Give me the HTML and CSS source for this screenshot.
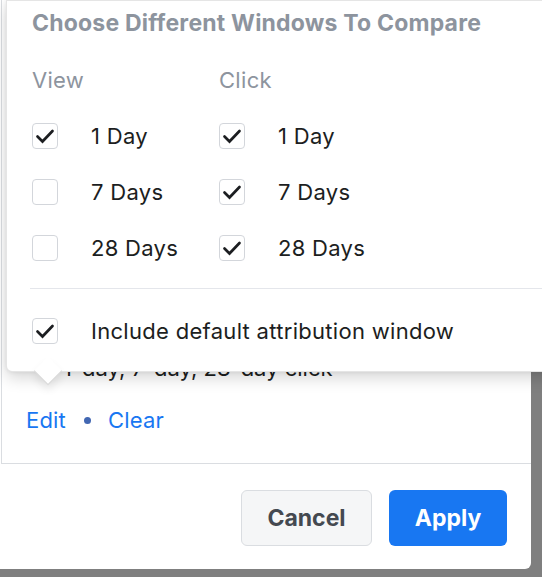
FILE: index.html
```html
<!DOCTYPE html>
<html lang="en">
<head>
<meta charset="utf-8">
<title>Choose Different Windows To Compare</title>
<link rel="stylesheet" href="styles.css">
</head>
<body>
<div class="dialog">
  <div class="dialog-body">
    <div class="card">
      <div class="summary">1-day, 7-day, 28-day click</div>
      <div class="links">
        <span class="link">Edit</span>
        <span class="dot"></span>
        <span class="link">Clear</span>
      </div>
    </div>
  </div>
  <div class="footer">
    <button class="btn btn-cancel">Cancel</button>
    <button class="btn btn-apply">Apply</button>
  </div>

  <div class="popover">
    <div class="pop-title">Choose Different Windows To Compare</div>
    <div class="grid">
      <div class="col-label">View</div>
      <div class="col-label">Click</div>
    </div>
    <div class="grid rows">
      <label class="opt"><span class="cb checked"><svg viewBox="0 0 26 26"><path d="M5.5 13.5 L10.5 18.5 L20.5 8"/></svg></span><span>1 Day</span></label>
      <label class="opt"><span class="cb checked"><svg viewBox="0 0 26 26"><path d="M5.5 13.5 L10.5 18.5 L20.5 8"/></svg></span><span>1 Day</span></label>
      <label class="opt"><span class="cb"></span><span>7 Days</span></label>
      <label class="opt"><span class="cb checked"><svg viewBox="0 0 26 26"><path d="M5.5 13.5 L10.5 18.5 L20.5 8"/></svg></span><span>7 Days</span></label>
      <label class="opt"><span class="cb"></span><span>28 Days</span></label>
      <label class="opt"><span class="cb checked"><svg viewBox="0 0 26 26"><path d="M5.5 13.5 L10.5 18.5 L20.5 8"/></svg></span><span>28 Days</span></label>
    </div>
    <div class="divider"></div>
    <label class="opt include"><span class="cb checked"><svg viewBox="0 0 26 26"><path d="M5.5 13.5 L10.5 18.5 L20.5 8"/></svg></span><span>Include default attribution window</span></label>
    <div class="caret"></div>
  </div>
</div>
</body>
</html>
```
FILE: styles.css
```css
html, body {
  margin: 0;
  padding: 0;
}
body {
  width: 542px;
  height: 577px;
  overflow: hidden;
  background: #7f7f7f;
  font-family: Inter, "Liberation Sans", Arial, sans-serif;
  color: #1c1e21;
}
.dialog {
  position: relative;
  width: 531px;
  height: 569px;
  background: #fff;
  border-bottom-right-radius: 6px;
  display: flex;
  flex-direction: column;
}
.dialog-body {
  height: 464px;
  padding-left: 1px;
}
.card {
  box-sizing: border-box;
  height: 464px;
  border-left: 1px solid #dadde1;
  border-bottom: 1px solid #dadde1;
  display: flex;
  flex-direction: column;
  justify-content: flex-end;
  padding: 0 0 31px 24px;
  font-size: 22px;
  line-height: 24px;
  letter-spacing: 0.2px;
}
.summary {
  padding-left: 37px;
  margin-bottom: 28px;
  letter-spacing: 0;
}
.links {
  display: flex;
  align-items: center;
}
.link {
  color: #1877f2;
}
.dot {
  width: 7px;
  height: 7px;
  border-radius: 50%;
  background: #4267b2;
  margin: 0 17px 0 18px;
}
.footer {
  flex: 1;
  display: flex;
  justify-content: flex-end;
  gap: 17px;
  padding: 26px 24px 0 0;
  box-sizing: border-box;
}
.btn {
  height: 56px;
  border-radius: 6px;
  font-family: Inter, "Liberation Sans", Arial, sans-serif;
  font-weight: 700;
  font-size: 23px;
  padding: 0;
  cursor: pointer;
}
.btn-cancel {
  width: 131px;
  background: #f5f6f7;
  border: 1.5px solid #dadde1;
  color: #444950;
}
.btn-apply {
  width: 118px;
  background: #1877f2;
  border: none;
  color: #fff;
}
.popover {
  position: absolute;
  left: 6px;
  top: 0;
  width: 560px;
  box-sizing: border-box;
  background: #fff;
  border: 1px solid rgba(0, 0, 0, 0.1);
  border-radius: 0 0 0 6px;
  box-shadow: 0 6px 16px rgba(0, 0, 0, 0.16), 0 0 4px rgba(0, 0, 0, 0.08);
  padding: 8px 0 12px 25px;
  font-size: 22px;
  line-height: 24px;
  letter-spacing: 0.3px;
}
.pop-title {
  font-size: 23px;
  line-height: 28px;
  font-weight: 700;
  letter-spacing: 0.2px;
  color: #8d949e;
}
.grid {
  display: grid;
  grid-template-columns: 187px auto;
}
.col-label {
  margin-top: 31px;
  color: #8d949e;
}
.rows {
  margin-top: 16px;
}
.opt {
  height: 56px;
  display: flex;
  align-items: center;
  gap: 33px;
}
.cb {
  box-sizing: border-box;
  width: 26px;
  height: 26px;
  border: 1.5px solid #d3d6db;
  border-radius: 4px;
  background: #fff;
  flex: none;
  display: flex;
}
.cb svg {
  width: 26px;
  height: 26px;
  margin: -1.5px;
  fill: none;
  stroke: #1c1e21;
  stroke-width: 2.7;
  stroke-linecap: round;
  stroke-linejoin: miter;
}
.divider {
  height: 1px;
  background: #e4e6eb;
  margin-top: 12px;
  margin-left: -2px;
}
.include {
  margin-top: 14px;
}
.caret {
  position: absolute;
  left: 31px;
  bottom: -10px;
  width: 19px;
  height: 19px;
  background: #fff;
  border-right: 1px solid rgba(0, 0, 0, 0.15);
  border-bottom: 1px solid rgba(0, 0, 0, 0.15);
  transform: rotate(45deg);
  box-shadow: 4px 4px 8px rgba(0, 0, 0, 0.08);
}
```
